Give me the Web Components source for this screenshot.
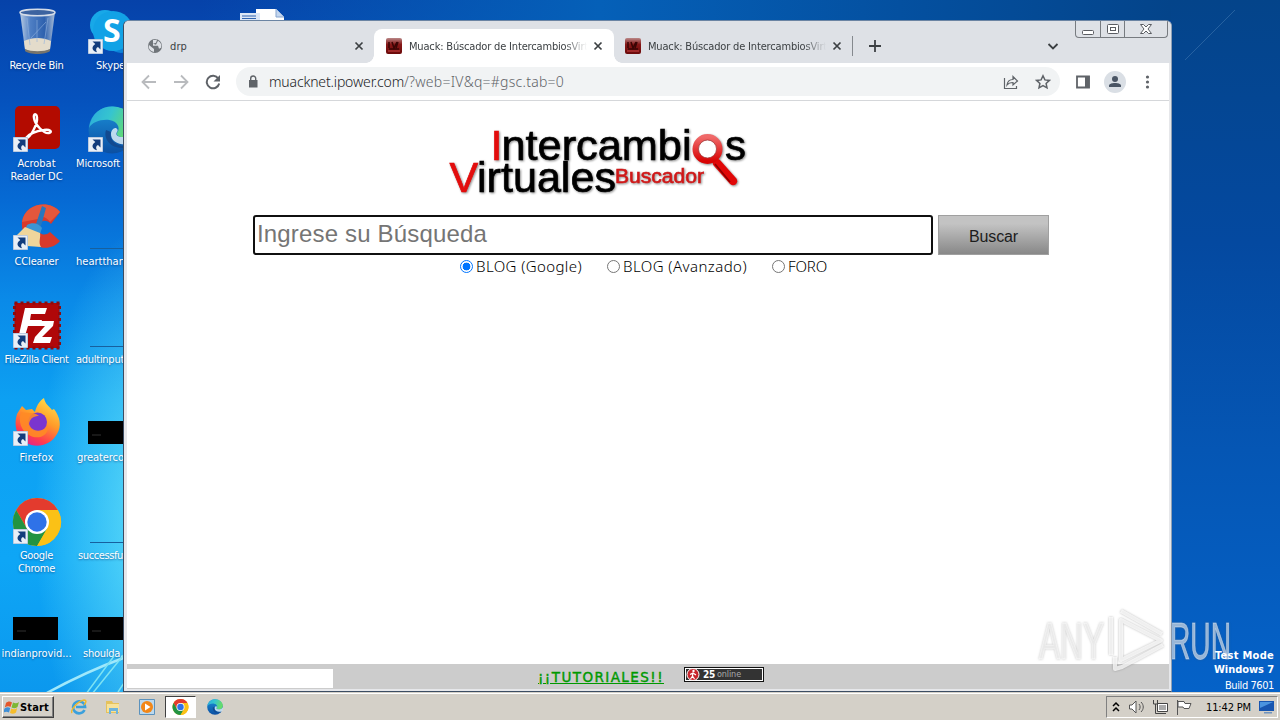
<!DOCTYPE html>
<html lang="es">
<head>
<meta charset="utf-8">
<title>Muack</title>
<style>
  body {
    margin: 0;
    width: 1280px;
    height: 720px;
    overflow: hidden;
    font-family: "DejaVu Sans Condensed", "DejaVu Sans", sans-serif;
    font-size: 11px;
  }
</style>
</head>
<body>
<desktop-screen></desktop-screen>

<script>
const ARROW = `
  <svg class="arrow" width="15" height="15" viewBox="0 0 15 15">
    <path d="M.5.5h14v14H.5z" fill="#e9eff7" stroke="#bccbe0"/>
    <path d="M4.500 2.500h8V10.500L10 8C8 9 7.500 10.500 9 13.200 4.500 12.500 2.500 8 7.300 5z" fill="#123c7c"/>
  </svg>`;

const CHROME = `
  <svg viewBox="0 0 48 48" width="100%" height="100%">
    <circle cx="24" cy="24" r="24" fill="#fbc116"/>
    <path d="M3.200 12A24 24 0 0 1 44.800 12H24L13.600 30z" fill="#e33b2e"/>
    <path d="M3.200 12A24 24 0 0 0 24 48L34.400 30 13.600 30z" fill="#229342"/>
    <path d="M24 48 34.400 30 24 24 13.600 30z" fill="#229342"/>
    <path d="M24 48 34.400 30V12h10.400A24 24 0 0 1 24 48z" fill="#fbc116"/>
    <circle cx="24" cy="24" r="12" fill="#fff"/>
    <circle cx="24" cy="24" r="9.700" fill="#2f72e8"/>
  </svg>`;

const EDGE = `
  <svg viewBox="0 0 48 48" width="100%" height="100%">
    <defs>
      <linearGradient id="e1" x1="0" y1="0" x2="1" y2=".3"><stop offset="0" stop-color="#2aa9dd"/><stop offset=".5" stop-color="#36c5cf"/><stop offset="1" stop-color="#66dc6a"/></linearGradient>
      <linearGradient id="e2" x1="0" y1="0" x2="0" y2="1"><stop offset="0" stop-color="#1b8fd8"/><stop offset="1" stop-color="#0b4fa2"/></linearGradient>
    </defs>
    <circle cx="24" cy="24" r="23.500" fill="url(#e2)"/>
    <path d="M1 22C3 7 14 0 25 .5 38 1 47.500 10 47.500 20c0 7-5 11-12 11-5 0-8-2-6-5 3-4 0-11-8-12C13 13 4 16 1 22z" fill="url(#e1)"/>
    <path d="M18 24c-3 9 5 18 16 18 4 0 8-2 11-5-3 3-7 4-11 3-8-1-13-8-11-14z" fill="#124a90"/>
    <path d="M29 26c-2 3 1 5 6 5 6 0 12-3 12-7 2 6 0 10-2 13-10 4-23 0-22-10 1-4 3-5 5-5 2 1 2 3 1 4z" fill="#e8f6fb" opacity=".8"/>
  </svg>`;

const ICONS = {
  bin: `
    <svg width="48" height="48">
      <defs><linearGradient id="b" x1="0" x2="1"><stop offset="0" stop-color="#b8cbe2"/><stop offset=".3" stop-color="#4f7fc4"/><stop offset=".7" stop-color="#2e61ae"/><stop offset="1" stop-color="#a9bdd8"/></linearGradient></defs>
      <path d="M7 4h35l-5 38c-4 4-21 4-25 0z" fill="url(#b)"/>
      <path d="M11 33c8-4 19-4 27 0l-1 8c-5 4-20 4-25 0z" fill="#e4dccb"/>
      <path d="M12 41c6 3 19 3 25 0v2c-4 4-21 4-25 0z" fill="#77746c"/>
      <path d="M14 10l3 27M24 12v22M35 10l-4 26M18 30 33 14" stroke="#8fb1de" fill="none" opacity=".6"/>
      <ellipse cx="24.500" cy="4.500" rx="17.500" ry="3.300" fill="#3c63a0" stroke="#d4dce8" stroke-width="1.500"/>
    </svg>`,
  skype: `
    <svg width="48" height="48">
      <circle cx="17" cy="17" r="15" fill="#18a8e8"/><circle cx="33" cy="30" r="15" fill="#0d82d8"/><circle cx="25" cy="23" r="20" fill="#12a2e6"/>
      <text x="15" y="34" font-family="Open Sans" font-weight="700" font-size="32" fill="#fff">S</text>
    </svg>`,
  acrobat: `
    <svg width="48" height="48">
      <rect x="2" y="0" width="45" height="43" rx="5" fill="#b30b00"/>
      <path d="M13 32c4 1 12-15 11-20 0-5-4-5-3 0 1 7 10 16 15 15 4-1 1-4-5-3-8 1-15 4-18 8z" fill="none" stroke="#fff" stroke-width="2.400"/>
    </svg>`,
  edge: `<div style="width:48px;height:48px">${EDGE}</div>`,
  ccleaner: `
    <svg width="48" height="48">
      <path d="M47 8C38-4 12-2 9 18c-2 20 24 35 38 19L37 28c-5 5-13 2-12-5 1-6 8-9 13-3z" fill="#d8392b"/>
      <path d="M47 8C38-4 12-2 9 18l16-3c3-3 8-3 12 3z" fill="#e4573c"/>
      <path d="M29 2 33 4 28 22 23 20z" fill="#2877bd"/>
      <path d="M14 21c5-3 12-2 15 3l-2 6-15-4z" fill="#3a95d5"/>
      <path d="M12 23 2 33l12 9 14 1c-3-5 0-9-1-14z" fill="#efd59b"/>
    </svg>`,
  filezilla: `
    <svg width="48" height="48">
      <rect x="1.500" y="1" width="45" height="45" fill="#b00709" stroke="#8e0a0c" stroke-width="3" stroke-dasharray="3 3"/>
      <path d="M12 6h22l-2 6H18l-1 6h12l-2 6H15l-4 13H5z" fill="#fff"/>
      <path d="M25 19h16l-1 5-11 11h10l-2 6H20l2-6 10-11h-8z" fill="#fff"/>
    </svg>`,
  firefox: `
    <svg width="48" height="48">
      <defs><linearGradient id="f" x1=".8" y1="0" x2=".3" y2="1"><stop offset="0" stop-color="#ffe14b"/><stop offset=".45" stop-color="#ff9a29"/><stop offset=".8" stop-color="#ff3d4d"/><stop offset="1" stop-color="#e0238c"/></linearGradient></defs>
      <path d="M4 14 9 6l4 4 6-1 3 3c1-5 4-11 9-14 1 6 5 8 8 12l2-1c6 8 8 17 3 25-9 16-32 15-39 0-3-7-3-13-1-20z" fill="url(#f)"/>
      <circle cx="24.500" cy="22" r="9.500" fill="#7a35cf"/>
      <path d="M8 12c6 2 12-1 18 4-5 0-9 2-10 8 3 9 14 8 19 2 1 11-12 14-19 9C8 31 5 21 8 12z" fill="#ff8b25" opacity=".9"/>
    </svg>`,
  chrome: `<div style="width:48px;height:48px">${CHROME}</div>`,
  black: `
    <svg width="48" height="48"><path d="M0 21h45v23H0z" fill="#000"/><path d="M4 35h9" stroke="#303030"/></svg>`,
  line: `<svg width="48" height="48"><path d="M2 44.500h46" stroke="#17609e"/></svg>`,
};

// Text that is tracked out (or in) to the width given by its "w" attribute
class FitText extends HTMLElement {
  constructor() {
    super();
    this.attachShadow({mode: 'open'}).innerHTML =
      '<style>:host { display: inline-block; white-space: pre; } span { display: inline-block; } :host([underline]) span { text-decoration: underline; }</style><span><slot></slot></span>';
  }

  connectedCallback() {
    const span = this.shadowRoot.querySelector('span');
    const width = Number(this.getAttribute('w'));
    const natural = span.getBoundingClientRect().width;
    const gap = (width - natural) / this.textContent.length;
    span.style.letterSpacing = `${gap}px`;
    this.style.width = `${width}px`;
  }
}

class DesktopIcon extends HTMLElement {
  connectedCallback() {
    const left = this.getAttribute('left');
    const arrow = this.hasAttribute('shortcut') ? ARROW : '';
    this.attachShadow({mode: 'open'}).innerHTML = `
      <style>
        :host { display: block; width: 75px; height: 98px; color: #fff; text-align: center; line-height: 13px; }
        .pic { position: relative; width: 48px; height: 48px; margin: 0 auto 3px; }
        .pic svg { display: block; overflow: visible; }
        .pic .arrow { position: absolute; left: 0; bottom: 2px; }
        .label { text-shadow: 0 1px 2px rgba(0, 30, 90, .5); ${left ? `text-align: left; padding-left: ${left}px;` : ''} }
      </style>
      <div class="pic">${ICONS[this.getAttribute('icon')]}${arrow}</div>
      <div class="label"><slot></slot></div>`;
  }
}

class BrowserTab extends HTMLElement {
  connectedCallback() {
    const globe = `
      <svg width="16" height="16"><circle cx="9" cy="8" r="7" fill="#70757a"/><path d="M3 7l5 4v3C4 13 2 10 3 7zM7 2l4-.3-1 3-3 1v2h5l1 3 2-1c1-3 0-5-3-7l-2 4-3-1z" fill="#dee1e6"/></svg>`;
    const muack = `
      <svg width="16" height="16"><defs><linearGradient id="m" x2="0" y2="1"><stop offset="0" stop-color="#b98787"/><stop offset=".4" stop-color="#861818"/><stop offset="1" stop-color="#6b0a0a"/></linearGradient></defs>
      <rect width="16" height="16" rx="2" fill="url(#m)"/><path d="M3 4v6M6 4l2 6 3-6M12 4l-2 6M3 11h10" stroke="#3a0505" stroke-width="1.500" fill="none"/><path d="M2 13h12" stroke="#c44"/></svg>`;
    this.attachShadow({mode: 'open'}).innerHTML = `
      <style>
        :host { display: flex; flex: none; align-items: center; position: relative; box-sizing: border-box; width: 240px; height: 34px; padding: 0 9px 0 12px; color: #3c4043; }
        :host([active]) { background: #fff; border-radius: 8px 8px 0 0; }
        :host([active])::before, :host([active])::after { content: ""; position: absolute; bottom: 0; width: 8px; height: 8px; }
        :host([active])::before { left: -8px; background: radial-gradient(circle at 0 0, transparent 7.5px, #fff 8px); }
        :host([active])::after { right: -8px; background: radial-gradient(circle at 100% 0, transparent 7.5px, #fff 8px); }
        .title { flex: 1; margin-left: 7px; overflow: hidden; height: 16px; line-height: 17px; }
        :host(:not([long])) { padding-right: 8px; }
        :host(:not([long])) .title { margin-left: 8px; }
        :host([long]) .title { -webkit-mask: linear-gradient(90deg, #000 155px, transparent 178px); mask: linear-gradient(90deg, #000 155px, transparent 178px); }
        .close { margin-left: 3px; flex: none; }
      </style>
      ${this.hasAttribute('long') ? muack : globe}
      <div class="title"><slot></slot></div>
      <svg class="close" width="14" height="14"><path d="M3.500 3.500l7 7M10.500 3.500l-7 7" stroke="#3c4043" stroke-width="1.700"/></svg>`;
  }
}

class CaptionButtons extends HTMLElement {
  connectedCallback() {
    this.attachShadow({mode: 'open'}).innerHTML = `
      <style>
        :host { display: flex; box-sizing: border-box; width: 93px; height: 17px; border: 1px solid #777b80; border-top: 0; border-radius: 0 0 4px 4px; }
        div { width: 25px; display: flex; justify-content: center; align-items: center; box-sizing: border-box; border-right: 1px solid #777b80; }
        div:last-child { width: 42px; border: 0; }
        path, rect { fill: #fff; stroke: #5a5d62; }
      </style>
      <div><svg width="12" height="17"><rect x=".5" y="9.500" width="11" height="4" rx="1"/></svg></div>
      <div><svg width="12" height="17"><rect x=".5" y="3.500" width="11" height="9" rx="1"/><rect x="3.500" y="6.500" width="5" height="3"/></svg></div>
      <div><svg width="12" height="17"><path d="M.5 3.500h3L6 6l2.500-2.500h3L8 8l3.500 4.500h-3L6 10l-2.500 2.500h-3L4 8z"/></svg></div>`;
  }
}

class TabStrip extends HTMLElement {
  connectedCallback() {
    this.attachShadow({mode: 'open'}).innerHTML = `
      <style>
        :host { display: flex; align-items: flex-end; height: 42px; background: #dee1e6; padding-left: 10px; }
        browser-tab:nth-of-type(2) { margin-right: -1px; }
        .sep { width: 1px; height: 20px; background: #85898e; align-self: flex-end; margin: 0 0 7px -1px; }
        .plus { margin: 0 0 10px 15px; }
        .down { margin: 0 0 10px auto; }
        caption-buttons { align-self: flex-start; margin: 0 3px 0 15px; }
      </style>
      <browser-tab><fit-text w="17">drp</fit-text></browser-tab>
      <browser-tab active long><fit-text w="179">Muack: Búscador de IntercambiosVirt</fit-text></browser-tab>
      <browser-tab long><fit-text w="179">Muack: Búscador de IntercambiosVirt</fit-text></browser-tab>
      <div class="sep"></div>
      <svg class="plus" width="14" height="14"><path d="M7 1v12M1 7h12" stroke="#3c4043" stroke-width="1.800"/></svg>
      <svg class="down" width="14" height="14"><path d="M2.500 5 7 9.500 11.500 5" fill="none" stroke="#3c4043" stroke-width="1.800"/></svg>
      <caption-buttons></caption-buttons>`;
  }
}

class BrowserToolbar extends HTMLElement {
  connectedCallback() {
    this.attachShadow({mode: 'open'}).innerHTML = `
      <style>
        :host { display: flex; align-items: center; box-sizing: border-box; height: 38px; background: #fff; border-bottom: 1px solid #d5d7da; padding: 0 10px 0 14px; }
        svg { fill: none; stroke: #5f6368; stroke-width: 1.800; flex: none; }
        .nav { margin-right: 16px; }
        .off { stroke: #b9bbbe; }
        .bar { display: flex; flex: none; align-items: center; box-sizing: border-box; width: 824px; height: 29px; border-radius: 15px; background: #f1f3f4; padding: 0 9px; margin: 0 15px 0 -1px; font: 300 14px/20px "Noto Sans", sans-serif; color: #202124; }
        .url { margin-left: 8px; flex: 1; display: flex; height: 20px; }
        .path { color: #5f6368; }
        .share { margin-right: 16px; }
        .user { margin: 0 13px; }
      </style>
      <svg class="nav off" width="16" height="16"><path d="M15 8H2M8 1.500 1.500 8 8 14.500"/></svg>
      <svg class="nav off" width="16" height="16"><path d="M1 8h13M8 1.500 14.500 8 8 14.500"/></svg>
      <svg class="nav" width="16" height="16"><path d="M13.300 4.500A6.300 6.300 0 1 0 14.200 9.500" stroke-width="2"/><path d="M15 1v6.500H8.500z" fill="#5f6368" stroke="none"/></svg>
      <div class="bar">
        <svg width="16" height="16"><path d="M4 6h8.500v7.500H4z" fill="#5f6368" stroke="none"/><path d="M5.700 7V4.500a2.500 2.500 0 0 1 5 0V7" stroke-width="1.400"/></svg>
        <div class="url"><fit-text w="135">muacknet.ipower.com</fit-text><fit-text class="path" w="160">/?web=IV&amp;q=#gsc.tab=0</fit-text></div>
        <svg class="share" width="16" height="16" style="stroke-width:1.2"><path d="M1.500 4v10.500h12V12M4 11c.5-4 2.500-5.500 6-5.500V2.500l4.500 4.500L10 11V8.500C7 8.500 5.500 9 4 11z"/></svg>
        <svg width="16" height="16" style="stroke-width:1.500"><path d="M8 1.800l1.900 4.100 4.500.5-3.300 3 .9 4.400L8 11.600l-4 2.200.9-4.400-3.300-3 4.500-.5z"/></svg>
      </div>
      <svg width="16" height="16"><path d="M2 2.500h12v11H2z"/><path d="M10 2h4.500v12H10z" fill="#5f6368" stroke="none"/></svg>
      <svg class="user" width="22" height="22" style="stroke:none"><circle cx="11" cy="11" r="11" fill="#dadfe5"/><circle cx="11" cy="8" r="3" fill="#4a5564"/><path d="M5 16v-1.500c0-3.500 12-3.500 12 0V16z" fill="#4a5564"/></svg>
      <svg width="16" height="16" style="stroke:none"><g fill="#5f6368" transform="translate(.5)"><circle cx="8" cy="3" r="1.600"/><circle cx="8" cy="8" r="1.600"/><circle cx="8" cy="13" r="1.600"/></g></svg>`;
  }
}

class SiteLogo extends HTMLElement {
  connectedCallback() {
    this.attachShadow({mode: 'open'}).innerHTML = `
      <style>
        :host { display: block; width: 320px; height: 90px; font-family: "Liberation Sans", Arial, sans-serif; }
        svg { display: block; filter: drop-shadow(1px 1px 1px rgba(0, 0, 0, .45)); }
      </style>
      <svg width="320" height="90">
        <defs><linearGradient id="g" x2="0" y2="1"><stop offset="0" stop-color="#f06a6a"/><stop offset="1" stop-color="#d80404"/></linearGradient></defs>
        <g font-size="43" stroke-width=".7">
          <text x="50.500" y="45" fill="#e30d0d" stroke="#e30d0d">I</text>
          <text x="61.500" y="45" textLength="190" lengthAdjust="spacingAndGlyphs" stroke="#000">ntercambi</text>
          <text x="285" y="45" textLength="21" lengthAdjust="spacingAndGlyphs" stroke="#000">s</text>
          <text x="9.500" y="77" fill="#e30d0d" stroke="#e30d0d">V</text>
          <text x="37" y="77" textLength="139" lengthAdjust="spacingAndGlyphs" stroke="#000">irtuales</text>
        </g>
        <text x="175" y="67.500" font-size="19.500" textLength="89" lengthAdjust="spacingAndGlyphs" fill="#d01818" stroke="#d01818" stroke-width=".6">Buscador</text>
        <path d="M277 48 293 66" stroke="#e10808" stroke-width="8.500" stroke-linecap="round"/>
        <path d="M275 49 290 67" stroke="#8c0000" stroke-width="1.500"/>
        <circle cx="267.500" cy="34" r="12" fill="none" stroke="url(#g)" stroke-width="6"/>
        <circle cx="267.500" cy="34" r="9" fill="#fff" stroke="#a33" stroke-width=".8"/>
      </svg>`;
  }
}

class RadioOption extends HTMLElement {
  connectedCallback() {
    this.attachShadow({mode: 'open'}).innerHTML = `
      <style>
        :host { display: flex; align-items: center; }
        i { box-sizing: border-box; width: 13px; height: 13px; border: 1px solid #767676; border-radius: 50%; margin: 0 3px 0 0; background: #fff; }
        :host([checked]) i { border-color: #0075ff; background: radial-gradient(circle, #0075ff 3.6px, #fff 4.2px); }
      </style>
      <i></i><slot></slot>`;
  }
}

class SearchPage extends HTMLElement {
  connectedCallback() {
    this.attachShadow({mode: 'open'}).innerHTML = `
      <style>
        :host { display: flex; flex-direction: column; height: 588px; background: #fff; color: #000; }
        site-logo { margin: 14px 0 0 313px; }
        .row { display: flex; margin: 10px 0 0 126px; gap: 5px; font-family: "Liberation Sans", Arial, sans-serif; }
        .input { box-sizing: border-box; width: 680px; height: 40px; border: 2px solid #101010; border-radius: 3px; padding: 0 2px; font-size: 24px; line-height: 34px; color: #757575; }
        .button { box-sizing: border-box; width: 111px; height: 40px; border: 1px solid #a0a0a0; background: linear-gradient(#c3c3c3 20%, #888); font-size: 16px; line-height: 41px; text-align: center; color: #1c1c1c; }
        .options { display: flex; margin: -1px 0 0 333px; height: 25px; gap: 25px; font: 300 15px/25px "Noto Sans", sans-serif; }
        footer { margin-top: auto; height: 25px; background: #ccc; display: flex; align-items: center; }
        .blank { width: 206px; height: 19px; margin-top: 4px; background: #fff; }
        a { margin: 1px 0 0 205px; font: 13.5px/18px "DejaVu Sans", sans-serif; color: #090; -webkit-text-stroke: .4px #090; }
        .online { display: flex; align-items: center; box-sizing: border-box; width: 80px; height: 15px; margin: 0 0 4px 20px; background: #333; border: 1px solid #111; box-shadow: inset 0 0 0 1px #fff; color: #aaa; font: 9px/13px "DejaVu Sans Condensed", sans-serif; }
        .online b { color: #fff; font-size: 10px; margin: 0 2px 0 3px; }
      </style>
      <site-logo></site-logo>
      <div class="row">
        <div class="input"><fit-text w="230">Ingrese su Búsqueda</fit-text></div>
        <div class="button"><fit-text w="49">Buscar</fit-text></div>
      </div>
      <div class="options">
        <radio-option checked><fit-text w="106">BLOG (Google)</fit-text></radio-option>
        <radio-option><fit-text w="124">BLOG (Avanzado)</fit-text></radio-option>
        <radio-option><fit-text w="39">FORO</fit-text></radio-option>
      </div>
      <footer>
        <div class="blank"></div>
        <a><fit-text w="126" underline>¡¡TUTORIALES!!</fit-text></a>
        <div class="online">
          <svg width="14" height="13" style="margin-left:1px"><circle cx="7" cy="6.500" r="6" fill="#c8242c" stroke="#fff"/><circle cx="7.500" cy="3" r="1.200" fill="#fff"/><path d="M7 4.500 6.500 8l2 3M6.500 8 4.500 11M4 6.500l3-1.500 3 2" stroke="#fff" fill="none" stroke-width="1.200"/></svg>
          <b><fit-text w="12">25</fit-text></b><fit-text w="24">online</fit-text>
        </div>
      </footer>`;
  }
}

class BrowserWindow extends HTMLElement {
  connectedCallback() {
    this.attachShadow({mode: 'open'}).innerHTML = `
      <style>
        :host { display: flex; flex-direction: column; box-sizing: border-box; width: 1049px; height: 672px; border: 1px solid #3c4d63; border-top-color: #6b84a3; border-right-color: #8fa0b5; border-radius: 6px 6px 0 0; background: #e6e7ea; overflow: hidden; }
        .body { margin: 0 2px 0 3px; }
      </style>
      <tab-strip></tab-strip>
      <div class="body">
        <browser-toolbar></browser-toolbar>
        <search-page></search-page>
      </div>`;
  }
}

class WaterMark extends HTMLElement {
  connectedCallback() {
    this.attachShadow({mode: 'open'}).innerHTML = `
      <style>
        :host { display: block; width: 200px; height: 70px; }
        svg { display: block; filter: drop-shadow(0 0 1px rgba(90, 90, 90, .55)); }
        text { font-family: "Liberation Sans", Arial, sans-serif; font-size: 51px; }
      </style>
      <svg width="200" height="70" fill="#fff" fill-opacity=".55" stroke="#fff" stroke-opacity=".4">
        <text x="4" y="52" textLength="65" lengthAdjust="spacingAndGlyphs">ANY</text>
        <text x="135" y="52" textLength="61" lengthAdjust="spacingAndGlyphs">RUN</text>
        <g fill="none" stroke="#fff" stroke-opacity=".75" stroke-width="4" stroke-linejoin="round">
          <path d="M86 13v40l40-19.500z"/>
          <path d="M76 48V10M86 4 127 27M80 50v12l7-2 41-22"/>
        </g>
      </svg>`;
  }
}

class TaskBar extends HTMLElement {
  connectedCallback() {
    this.attachShadow({mode: 'open'}).innerHTML = `
      <style>
        :host { display: flex; align-items: center; box-sizing: border-box; height: 28px; background: #d4d0c8; border-top: 1px solid #d4d0c8; box-shadow: inset 0 1px #fff; padding: 1px 2px 0; }
        .start { display: flex; align-items: center; box-sizing: border-box; width: 52px; height: 22px; border: 1px solid; border-color: #fff #404040 #404040 #fff; box-shadow: inset -1px -1px #808080; padding-left: 1px; font-weight: bold; }
        .start svg { flex: none; }
        .start fit-text { color: #000; }
        .quick { display: flex; align-items: center; margin-left: 17px; }
        .item { display: flex; width: 16px; height: 16px; margin-right: 18px; }
        .pressed { box-sizing: border-box; width: 31px; height: 22px; margin: 0 11px 0 -8px; padding: 2px 6px; border: 1px solid; border-color: #404040 #fff #fff #404040; background: #fff; }
        .tray { display: flex; align-items: center; margin-left: auto; box-sizing: border-box; width: 172px; height: 22px; padding: 0 0 0 5px; border: 1px solid; border-color: #808080 #fff #fff #808080; color: #000; }
        .tray svg { margin-right: 8px; flex: none; }
        .tray svg:last-child { margin: 0 0 0 8px; }
      </style>
      <div class="start">
        <svg width="16" height="16"><path d="M2 4c2-2 4-2 6-.5L6.500 8C5 7 3 7 .8 8.500z" fill="#e4572b"/><path d="M9 3.500c2 1 4 1 6-.5l-1.500 5c-2 1.500-4 1.500-6 .5z" fill="#7db733"/><path d="M.5 9.500c2-1.500 4-1.500 5.700-.5L5 13.500c-2-1-4-1-6 .5z" fill="#3f8fd6"/><path d="M7.200 9.500c2 1 4 1 6-.5L12 13.500c-2 1.500-4 1.500-6 .5z" fill="#f6bd2b"/></svg>
        <fit-text w="29">Start</fit-text>
      </div>
      <div class="quick">
        <div class="item"><svg width="16" height="16"><path d="M13.500 11a6 6 0 1 1 .6-3H5" fill="none" stroke="#3ba0dc" stroke-width="2.600"/><path d="M1 14C-1 11 7 2 13 1c3 0 2 3 0 5" fill="none" stroke="#efb92b" stroke-width="1.500"/></svg></div>
        <div class="item"><svg width="16" height="16"><path d="M1 2h6l1 2h6v10H1z" fill="#e5c25c"/><path d="M2 5h12v8H2z" fill="#f7e29a"/><path d="M4 15V9h9v6h-2v-3H6v3z" fill="#6fb4dc"/></svg></div>
        <div class="item"><svg width="16" height="16"><path d="M.5.5h15v15H.5z" fill="#bcd9ee" stroke="#5b92bd"/><circle cx="8" cy="8" r="6" fill="#f28718"/><path d="M6 4.500 11.500 8 6 11.500z" fill="#fff"/></svg></div>
        <div class="item pressed">${CHROME}</div>
        <div class="item">${EDGE}</div>
      </div>
      <div class="tray">
        <svg width="8" height="12"><path d="M1 5l3-3 3 3M1 10l3-3 3 3" fill="none" stroke="#000" stroke-width="1.500"/></svg>
        <svg width="16" height="16" fill="#fff" stroke="#555"><path d="M1.500 6h2.500L8 2v12l-4-4H1.500z"/><path d="M11 5c1.500 2 1.500 4 0 6M13 3c3 3 3 7 0 10" fill="none"/></svg>
        <svg width="16" height="16" fill="#fff" stroke="#444"><path d="M5.500 4.500h10v8h-10zM7 14.500h7" /><path d="M7 6h7v5H7z" fill="#aaa" stroke="none"/><path d="M1.500 1v4h4V1M3.500 5v9.500H8" fill="none"/></svg>
        <svg width="16" height="16" fill="#fff" stroke="#555"><path d="M1.500 1v15M2 2.500h6l1 2h6l-2 5H8l-1-1.500H2z"/></svg>
        <fit-text w="45" style="margin-left:6px">11:42 PM</fit-text>
        <svg width="16" height="16"><path d="M0 2h15v10H0z" fill="#1856b0"/><path d="M1 3h13L1 9z" fill="#4b94df"/><path d="M5 13h8v1.500H5z" fill="#6f93be"/></svg>
      </div>`;
  }
}

class DesktopScreen extends HTMLElement {
  connectedCallback() {
    this.attachShadow({mode: 'open'}).innerHTML = `
      <style>
        :host { display: flex; flex-direction: column; width: 1280px; height: 720px; position: relative; overflow: hidden; }
        .desk {
          flex: 1;
          position: relative;
          background:
            radial-gradient(ellipse 125px 300px at 160px 520px, rgba(115, 235, 250, .85), transparent),
            linear-gradient(#04448a, #0449a0 35%, #0556b4 65%, #0562c8) 1171px 0 / 109px 100% no-repeat,
            linear-gradient(90deg, transparent 200px, #0560b8 600px, #0450a0 900px, #04448a 1171px) 0 0 / 100% 21px no-repeat,
            linear-gradient(#0642a9, #0552bd 100px, #066ad4 200px, #0a8ae8 300px, #0da0f2 400px, #0ea6f6 560px, #0b98ee 692px);
        }
        .icons { display: grid; grid-template-columns: 75px 75px; grid-auto-rows: 98px; padding-top: 8px; margin-left: -1px; width: 150px; height: 684px; box-sizing: border-box; overflow: hidden; }
        .rays, .file, browser-window, water-mark, .build { position: absolute; }
        .rays { left: 0; top: 0; }
        .file { left: 238px; top: 7px; }
        browser-window { left: 123px; top: 20px; }
        water-mark { left: 1035px; top: 607px; }
        .build { right: 6px; bottom: -2px; color: #fff; text-align: right; line-height: 14px; font-weight: bold; }
        .build div:last-child { font-weight: normal; line-height: 17px; }
        fit-text { vertical-align: top; }
      </style>
      <div class="desk">
        <svg class="rays" width="1280" height="692" fill="none">
          <path d="M45 694Q85 672 126 657" stroke="#9fe8fb" stroke-width="2.500"/>
          <path d="M86 694 114 656M92 694 126 652M118 692l8-12" stroke="#7de3f4" stroke-width="1.500"/>
          <path d="M1185 60 1235 10" stroke="#3d74ad" opacity=".6"/>
        </svg>
        <div class="icons">
          <desktop-icon icon="bin"><fit-text w="54">Recycle Bin</fit-text></desktop-icon>
          <desktop-icon icon="skype" shortcut left="22"><fit-text w="29">Skype</fit-text></desktop-icon>
          <desktop-icon icon="acrobat" shortcut><fit-text w="38">Acrobat</fit-text><br><fit-text w="52">Reader DC</fit-text></desktop-icon>
          <desktop-icon icon="edge" shortcut left="2"><fit-text w="44">Microsoft</fit-text></desktop-icon>
          <desktop-icon icon="ccleaner" shortcut><fit-text w="44">CCleaner</fit-text></desktop-icon>
          <desktop-icon icon="line" left="2"><fit-text w="49">heartthan</fit-text></desktop-icon>
          <desktop-icon icon="filezilla" shortcut><fit-text w="64">FileZilla Client</fit-text></desktop-icon>
          <desktop-icon icon="line" left="2"><fit-text w="48">adultinput</fit-text></desktop-icon>
          <desktop-icon icon="firefox" shortcut><fit-text w="34">Firefox</fit-text></desktop-icon>
          <desktop-icon icon="black" left="3"><fit-text w="47">greaterco</fit-text></desktop-icon>
          <desktop-icon icon="chrome" shortcut><fit-text w="33">Google</fit-text><br><fit-text w="37">Chrome</fit-text></desktop-icon>
          <desktop-icon icon="line" left="4"><fit-text w="45">successfu</fit-text></desktop-icon>
          <desktop-icon icon="black"><fit-text w="70">indianprovid...</fit-text></desktop-icon>
          <desktop-icon icon="black" left="9"><fit-text w="40">shoulda.</fit-text></desktop-icon>
        </div>
        <svg class="file" width="50" height="14"><path d="M18 2h20l8 8v4H18z" fill="#fff"/><path d="M38 2v8h8" fill="#c4d6ee" stroke="#86a5cf"/><path d="M2 6h20v8H2z" fill="#dce7f6"/><path d="M4 9h14M4 11.500h14" stroke="#3165b0"/></svg>
        <browser-window></browser-window>
        <water-mark></water-mark>
        <div class="build">
          <div><fit-text w="59">Test Mode</fit-text></div>
          <div><fit-text w="60">Windows 7</fit-text></div>
          <div><fit-text w="49">Build 7601</fit-text></div>
        </div>
      </div>
      <task-bar></task-bar>`;
  }
}

customElements.define('fit-text', FitText);
customElements.define('desktop-icon', DesktopIcon);
customElements.define('browser-tab', BrowserTab);
customElements.define('caption-buttons', CaptionButtons);
customElements.define('tab-strip', TabStrip);
customElements.define('browser-toolbar', BrowserToolbar);
customElements.define('site-logo', SiteLogo);
customElements.define('radio-option', RadioOption);
customElements.define('search-page', SearchPage);
customElements.define('browser-window', BrowserWindow);
customElements.define('water-mark', WaterMark);
customElements.define('task-bar', TaskBar);
customElements.define('desktop-screen', DesktopScreen);
</script>
</body>
</html>
